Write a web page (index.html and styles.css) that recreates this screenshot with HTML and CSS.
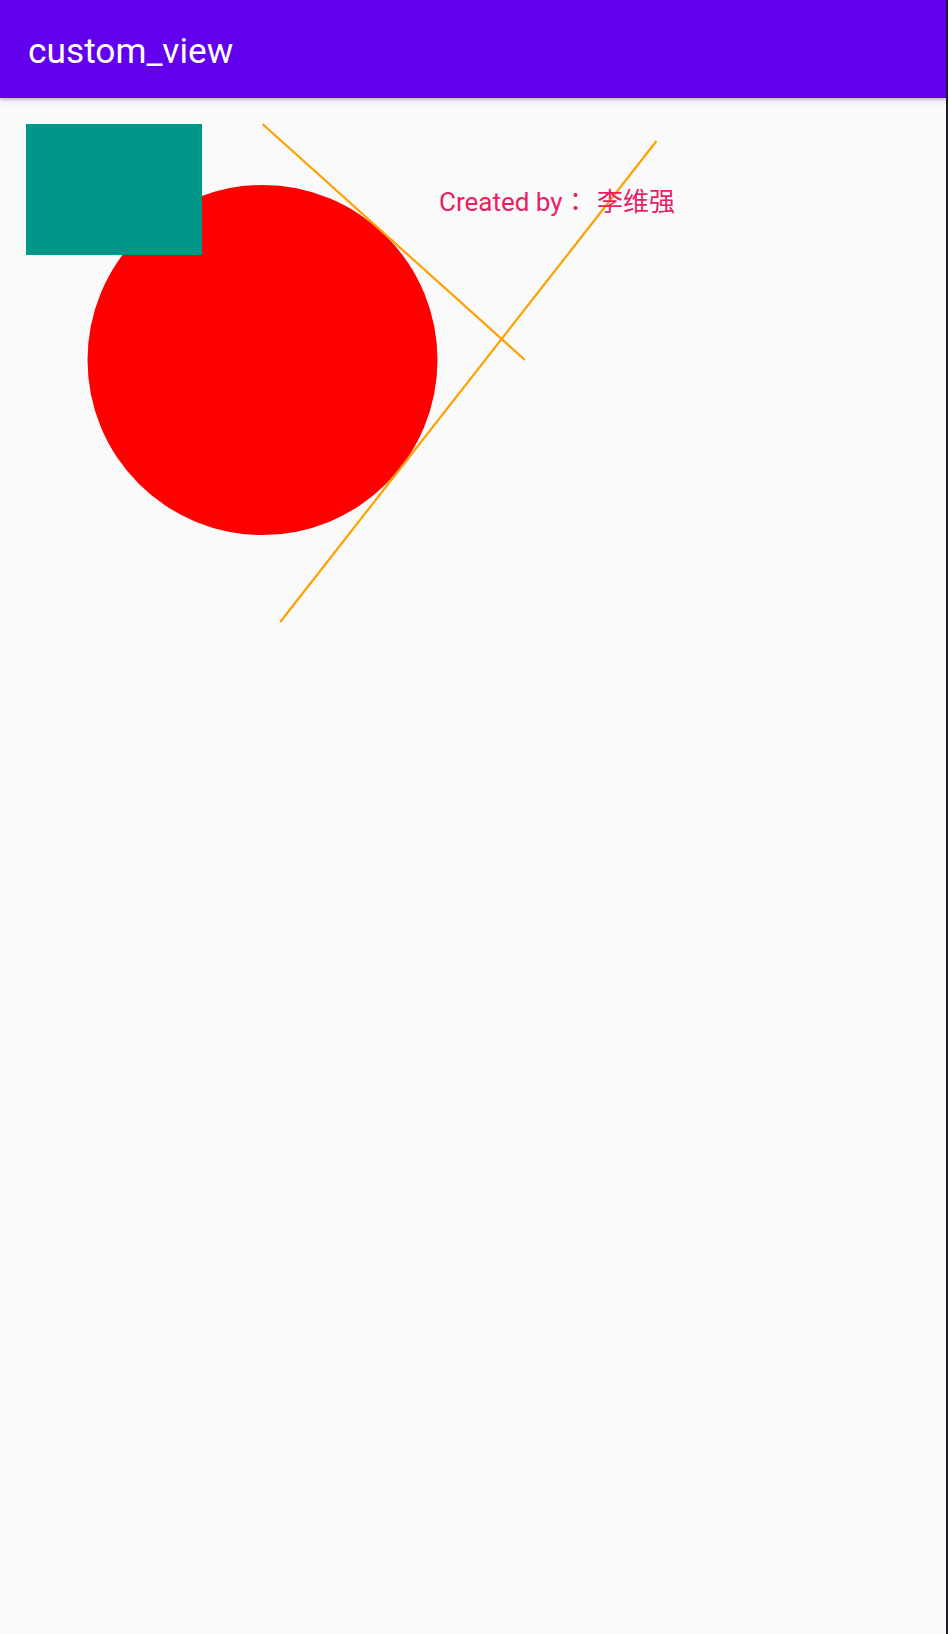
FILE: index.html
```html
<!DOCTYPE html>
<html lang="en">
<head>
<meta charset="utf-8">
<title>custom_view</title>
<link rel="stylesheet" href="styles.css">
</head>
<body>
<div class="screen">
  <div class="app">
    <header class="appbar">
      <h1 class="title">custom_view</h1>
    </header>
    <main class="content">
      <svg class="canvas" width="946" height="1536" viewBox="0 98 946 1536" xmlns="http://www.w3.org/2000/svg">
        <circle cx="262.5" cy="360" r="175" fill="#ff0000"/>
        <rect x="26" y="124" width="176" height="131" fill="#009688"/>
        <line x1="262.5" y1="124" x2="525" y2="360" stroke="#ffa000" stroke-width="2.2"/>
        <line x1="656.5" y1="141" x2="280.2" y2="622" stroke="#ffa000" stroke-width="2.2"/>
        <text class="credit" x="439" y="211" lang="ja">Created by： <tspan dx="2">李维强</tspan></text>
      </svg>
    </main>
  </div>
  <div class="edge"></div>
</div>
</body>
</html>
```

FILE: styles.css
```css
html, body {
  margin: 0;
  padding: 0;
}
body {
  width: 948px;
  height: 1634px;
  overflow: hidden;
  background: #fafafa;
  font-family: Roboto, "Noto Sans CJK JP", sans-serif;
}
.screen {
  display: flex;
  width: 948px;
  height: 1634px;
}
.app {
  width: 946px;
  height: 1634px;
  display: flex;
  flex-direction: column;
  background: #fafafa;
  position: relative;
}
.edge {
  width: 2px;
  height: 1634px;
  background: #1d1d22;
}
.appbar {
  height: 98px;
  flex: none;
  background: #6200ee;
  display: flex;
  align-items: center;
  padding-left: 28px;
  position: relative;
  z-index: 1;
  box-shadow: 0 2px 2px rgba(0,0,0,0.18), 0 4px 8px rgba(0,0,0,0.06);
}
.title {
  margin: 0;
  font-family: Roboto, sans-serif;
  font-weight: 400;
  font-size: 35.3px;
  color: #ffffff;
  line-height: 1;
  position: relative;
  top: 3px;
}
.content {
  flex: 1;
  display: block;
}
.canvas {
  display: block;
}
.credit {
  font-family: Roboto, "Noto Sans CJK JP", sans-serif;
  font-size: 26px;
  fill: #e91e63;
}
```
